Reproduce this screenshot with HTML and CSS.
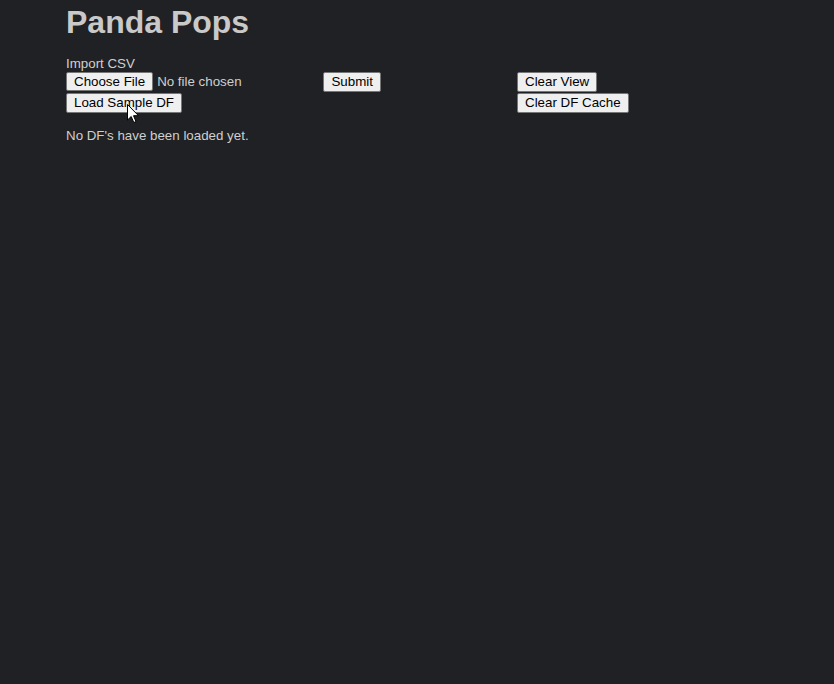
FILE: index.html
```html
<!DOCTYPE html>
<html>
<head>
<meta charset="utf-8">
<title>Panda Pops</title>
<link rel="stylesheet" href="styles.css">
</head>
<body>
<div class="page">
  <h1 class="title">Panda Pops</h1>
  <div class="controls">
    <div class="col-left">
      <label class="label" for="csv">Import CSV</label>
      <div class="row">
        <input type="file" id="csv" class="file"> <button class="btn">Submit</button>
      </div>
      <div class="row">
        <button class="btn">Load Sample DF</button>
      </div>
    </div>
    <div class="col-right">
      <div class="row"><button class="btn">Clear View</button></div>
      <div class="row"><button class="btn">Clear DF Cache</button></div>
    </div>
  </div>
  <p class="status">No DF's have been loaded yet.</p>
</div>
<svg class="cursor" width="13" height="20" viewBox="0 0 13 20">
  <path d="M0.5 0.5 L0.5 16 L4.2 12.5 L6.8 18.5 L9 17.6 L6.5 11.7 L11.5 11.7 Z" fill="#fff" stroke="#000" stroke-width="1" stroke-linejoin="miter"/>
</svg>
</body>
</html>
```
FILE: styles.css
```css
html, body {
  margin: 0;
  background: #202124;
}
body {
  font-family: "Liberation Sans", Arial, sans-serif;
  color: #cfcfcf;
  min-height: 684px;
  position: relative;
}
.page {
  padding: 0 66px;
}
.title {
  font-size: 32px;
  font-weight: bold;
  line-height: 37px;
  margin: 4px 0 0;
  color: #c9c9c9;
}
.controls {
  display: grid;
  grid-template-columns: 451px auto;
  margin-top: 15px;
}
.col-right {
  padding-top: 16px;
}
.label {
  display: block;
  font-size: 13.333px;
  line-height: 16px;
}
.row {
  height: 20px;
  margin-bottom: 1px;
  white-space: nowrap;
}
.file {
  font-family: "Liberation Sans", Arial, sans-serif;
  font-size: 13.333px;
  color: #cfcfcf;
  width: 253px;
}
.file::file-selector-button {
  font-family: "Liberation Sans", Arial, sans-serif;
  font-size: 13.333px;
  background: #efefef;
  color: #000;
  border: 1px solid #767676;
  border-radius: 2px;
  padding: 1px 7px;
  margin-right: 4px;
}
.btn {
  font-family: "Liberation Sans", Arial, sans-serif;
  font-size: 13.333px;
  background: #efefef;
  color: #000;
  border: 1px solid #767676;
  border-radius: 2px;
  padding: 1px 7px;
  height: 20px;
  line-height: 16px;
}
.status {
  font-size: 13.333px;
  margin: 14px 0 0;
  line-height: 15px;
}
.cursor {
  position: absolute;
  left: 127px;
  top: 104px;
}
```
